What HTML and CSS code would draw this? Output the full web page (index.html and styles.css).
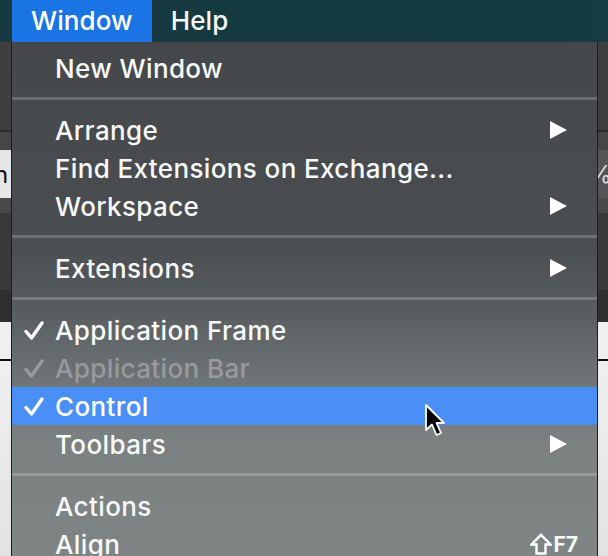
FILE: index.html
```html
<!DOCTYPE html>
<html>
<head>
<meta charset="utf-8">
<link rel="stylesheet" href="styles.css">
</head>
<body>
<div class="menubar">
  <div class="mb-spacer"></div>
  <div class="mb-item active">Window</div>
  <div class="mb-item">Help</div>
</div>
<div class="stage">
  <div class="app">
    <div class="band b1"></div>
    <div class="band line"></div>
    <div class="band b2"></div>
    <div class="band b3"><span class="lt">n</span><span class="rt">)%</span></div>
    <div class="band b4"></div>
    <div class="band b5"></div>
    <div class="band b6"></div>
    <div class="band b7"></div>
    <div class="band bline"></div>
    <div class="band b8"></div>
  </div>

  <div class="menu">
    <div class="item"><span class="label">New Window</span></div>
    <div class="sep"></div>
    <div class="item"><span class="label">Arrange</span><svg class="arrow" viewBox="0 0 17 18"><path d="M0 0 L17 9 L0 18 Z"/></svg></div>
    <div class="item"><span class="label">Find Extensions on Exchange...</span></div>
    <div class="item"><span class="label">Workspace</span><svg class="arrow" viewBox="0 0 17 18"><path d="M0 0 L17 9 L0 18 Z"/></svg></div>
    <div class="sep"></div>
    <div class="item"><span class="label">Extensions</span><svg class="arrow" viewBox="0 0 17 18"><path d="M0 0 L17 9 L0 18 Z"/></svg></div>
    <div class="sep"></div>
    <div class="item"><svg class="check" viewBox="0 0 20 19"><path d="M2 10.5 L7.5 17 L18 2"/></svg><span class="label">Application Frame</span></div>
    <div class="item disabled"><svg class="check" viewBox="0 0 20 19"><path d="M2 10.5 L7.5 17 L18 2"/></svg><span class="label">Application Bar</span></div>
    <div class="item selected"><svg class="check" viewBox="0 0 20 19"><path d="M2 10.5 L7.5 17 L18 2"/></svg><span class="label">Control</span></div>
    <div class="item"><span class="label">Toolbars</span><svg class="arrow" viewBox="0 0 17 18"><path d="M0 0 L17 9 L0 18 Z"/></svg></div>
    <div class="sep"></div>
    <div class="item"><span class="label">Actions</span></div>
    <div class="item"><span class="label">Align</span><span class="shortcut"><svg class="shift" viewBox="0 0 22 22"><path d="M11 1.8 L20.5 11.5 L15.5 11.5 L15.5 20.5 L6.5 20.5 L6.5 11.5 L1.5 11.5 Z"/></svg>F7</span></div>
  </div>

  <svg class="cursor" viewBox="0 0 24 36"><path d="M2 2 L2 27 L8 21.5 L12.5 32 L17 30 L12.5 20 L20 20 Z"/></svg>
</div>
</body>
</html>
```

FILE: styles.css
```css
html, body {
  margin: 0;
  padding: 0;
}
body {
  width: 608px;
  height: 556px;
  overflow: hidden;
  background: #3d3d3d;
  font-family: Inter, "Open Sans", "Liberation Sans", sans-serif;
  -webkit-font-smoothing: antialiased;
}

.menubar {
  display: flex;
  height: 42px;
  background: linear-gradient(90deg, #163a3f 0%, #143940 60%, #153c43 100%);
  color: #f4f7f7;
  font-size: 26px;
  font-weight: 500;
  line-height: 42px;
}
.mb-spacer { width: 12px; }
.mb-item {
  padding: 0 19px;
  letter-spacing: 0.1px;
}
.mb-item.active {
  background: #1a74e4;
  color: #ffffff;
}

.stage {
  position: relative;
  height: 514px;
}

.app {
  display: flex;
  flex-direction: column;
  height: 100%;
}
.band { flex: none; }
.b1 { height: 88px; background: #3e3e3e; }
.line { height: 2px; background: #2a2a2a; }
.b2 { height: 18px; background: #464646; }
.b3 {
  height: 48px;
  display: flex;
  justify-content: space-between;
  align-items: center;
  font-size: 24px;
  background: linear-gradient(90deg, #e6e6e6 0 50%, #555555 50% 100%);
}
.b3 .lt { color: #111; margin-left: -6px; }
.b3 .rt { color: #dddddd; margin-right: -4px; }
.b4 { height: 15px; background: #4a4a4a; }
.b5 { height: 77px; background: #3a3a3a; }
.b6 { height: 32px; background: #2f2f2f; }
.b7 { height: 37px; background: #efefef; }
.bline { height: 2px; background: #111111; }
.b8 { flex: 1; background: linear-gradient(180deg, #f0f0f0, #e2e2e2); }

.menu {
  position: absolute;
  left: 11px;
  top: 0;
  width: 585px;
  height: 530px;
  border-left: 1px solid #1c1d1e;
  border-right: 1px solid #1c1d1e;
  padding-top: 7px;
  background: linear-gradient(180deg,
    #44484b 0px,
    #4a4e51 200px,
    #555a5d 258px,
    #727779 348px,
    #7b8081 398px,
    #7f8485 514px);
  color: #f7f8f8;
  font-size: 26px;
  font-weight: 500;
}

.item {
  position: relative;
  display: flex;
  align-items: center;
  height: 38px;
  padding-left: 43px;
  padding-right: 30px;
}
.label {
  flex: 1;
  white-space: nowrap;
  letter-spacing: 0.38px;
}
.item.disabled { color: #979b9d; }
.item.selected { background: #4a8ff6; color: #fff; }

.sep {
  height: 3px;
  margin: 10px 0 11px;
  background: rgba(255, 255, 255, 0.2);
}

.arrow {
  width: 17px;
  height: 18px;
  fill: #ffffff;
}

.check {
  position: absolute;
  left: 12px;
  top: 10px;
  width: 20px;
  height: 19px;
  fill: none;
  stroke: #ffffff;
  stroke-width: 3.4;
  stroke-linecap: round;
  stroke-linejoin: round;
}
.disabled .check { stroke: #979b9d; }

.shortcut {
  display: flex;
  align-items: center;
  margin-right: -11px;
  font-size: 21px;
  font-weight: 700;
  gap: 1px;
}
.shift {
  width: 22px;
  height: 22px;
  fill: none;
  stroke: #ffffff;
  stroke-width: 2.4;
  stroke-linejoin: miter;
}

.cursor {
  position: absolute;
  left: 424px;
  top: 361px;
  width: 24px;
  height: 36px;
  fill: #000000;
  stroke: #ffffff;
  stroke-width: 1.8;
  stroke-linejoin: round;
}
```
